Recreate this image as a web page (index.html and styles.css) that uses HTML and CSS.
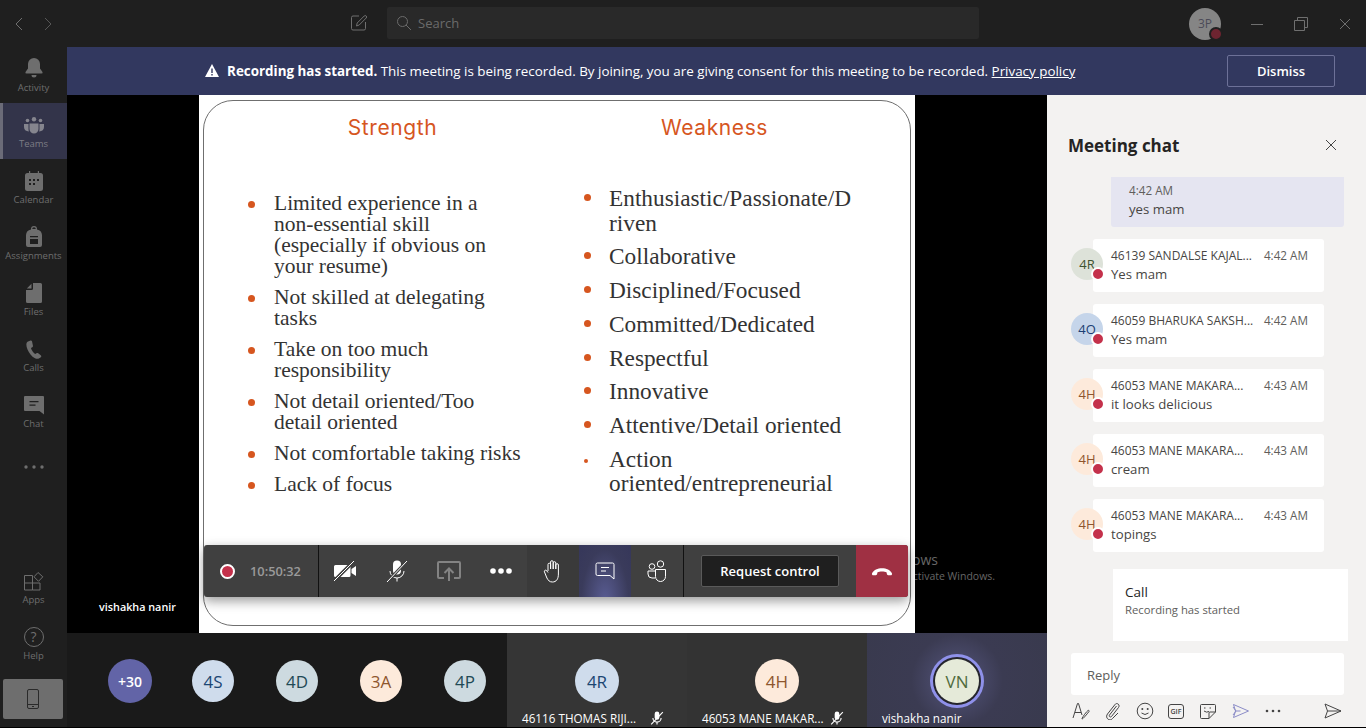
FILE: index.html
```html
<!DOCTYPE html>
<html lang="en">
<head>
    <meta charset="UTF-8">
    <meta name="viewport" content="width=device-width, initial-scale=1.0">
    <title>Meeting</title>
    <link rel="stylesheet" href="styles.css">
</head>
<body>
<div class="app">
    <header class="topbar">
        <div class="history">
            <svg width="10" height="16" viewBox="0 0 10 16"><path d="M8 2 2 8l6 6" class="line"/></svg>
            <svg width="10" height="16" viewBox="0 0 10 16"><path d="M2 2l6 6-6 6" class="line dim"/></svg>
        </div>
        <svg class="compose" width="18" height="18" viewBox="0 0 18 18"><path d="M9 2H3a1.5 1.5 0 0 0-1.500 1.500v11A1.500 1.500 0 0 0 3 16h11a1.500 1.500 0 0 0 1.500-1.500V8M6.500 12l.7-3 7-7a1.400 1.400 0 0 1 2 2l-7 7z" class="line"/></svg>
        <div class="search">
            <svg width="16" height="16" viewBox="0 0 16 16"><circle cx="6.500" cy="6.500" r="5" class="line"/><path d="M10 10l5 5" class="line"/></svg>
            <span>Search</span>
        </div>
        <div class="me">3P<i class="me-status"></i></div>
        <div class="window-btns">
            <svg width="14" height="14" viewBox="0 0 14 14"><path d="M1 7.500h12" class="line"/></svg>
            <svg width="14" height="14" viewBox="0 0 14 14"><path d="M3.500 3V.5h10v10H11M.5 3.500h10v10H.5z" class="line"/></svg>
            <svg width="14" height="14" viewBox="0 0 14 14"><path d="M2 2l10 10M12 2 2 12" class="line"/></svg>
        </div>
    </header>

    <div class="content">
        <nav class="rail">
            <a class="rail-item">
                <svg width="20" height="22" viewBox="0 0 20 22"><path d="M10 1a6 6 0 0 0-6 6v4.500L1.500 15q-.5 1.500 1 1.500h15q1.500 0 1-1.500L16 11.500V7a6 6 0 0 0-6-6zM7.500 18h5a2.500 2.500 0 0 1-5 0z"/></svg>
                Activity
            </a>
            <a class="rail-item active">
                <svg width="20" height="18" viewBox="0 0 20 18"><circle cx="10" cy="2.200" r="2.200"/><circle cx="3.500" cy="3.500" r="1.800"/><circle cx="16.500" cy="3.500" r="1.800"/><path d="M5.500 6.500h9V12a4.500 4.500 0 0 1-9 0zM0 7h4.500v5q0 1.500.5 2.500Q0 14 0 10zM20 7h-4.500v5q0 1.500-.5 2.500q5-.5 5-4.500z"/></svg>
                Teams
            </a>
            <a class="rail-item">
                <svg width="18" height="20" viewBox="0 0 18 20"><path d="M2.500 2H4V0h1.200v2h7.600V0H14v2h1.500A2.500 2.500 0 0 1 18 4.500v13a2.500 2.500 0 0 1-2.500 2.500h-13A2.500 2.500 0 0 1 0 17.500v-13A2.500 2.500 0 0 1 2.500 2z"/><path d="M4 8h2v2H4zM8 8h2v2H8zM12 8h2v2h-2zM4 12h2v2H4zM8 12h2v2H8z" fill="#1f1f1f"/></svg>
                Calendar
            </a>
            <a class="rail-item">
                <svg width="18" height="21" viewBox="0 0 18 21"><path d="M6 3.500V3a3 3 0 0 1 6 0v.5A6 6 0 0 1 17 9v10a2 2 0 0 1-2 2H3a2 2 0 0 1-2-2V9a6 6 0 0 1 5-5.500zM7.200 3h3.600a1.800 1.800 0 0 0-3.600 0z"/><path d="M5 10h8v1.300H5zM5 13h8v5H5z" fill="#1f1f1f"/></svg>
                Assignments
            </a>
            <a class="rail-item">
                <svg width="16" height="20" viewBox="0 0 16 20"><path d="M7 0h7.500A1.500 1.500 0 0 1 16 1.500v17a1.500 1.500 0 0 1-1.500 1.500h-13A1.500 1.500 0 0 1 0 18.500V7h5.500A1.500 1.500 0 0 0 7 5.500zM5.500 .8V5.500H.8z"/></svg>
                Files
            </a>
            <a class="rail-item">
                <svg width="16" height="19" viewBox="0 0 16 19"><path d="M4.500.5 1.500 1.800C0 3 0 6 1.500 9.500s4 7 7.500 8.800c2 1 4.500.5 6-1.300.5-.7.300-1.300-.3-1.800l-2.500-2c-.6-.4-1.200-.4-1.700 0l-1.300.9c-1.500-.7-3.800-4-4.200-6l1.300-.8c.6-.4.8-1 .6-1.700L6 1.300C5.700.5 5.200.2 4.500.5z"/></svg>
                Calls
            </a>
            <a class="rail-item">
                <svg width="20" height="19" viewBox="0 0 20 19"><path d="M1 0h18a1 1 0 0 1 1 1v17.500L15.500 15H1a1 1 0 0 1-1-1V1a1 1 0 0 1 1-1z"/><path d="M5.500 5h9v1.300h-9zM5.500 8.500h6v1.300h-6z" fill="#1f1f1f"/></svg>
                Chat
            </a>
            <a class="rail-item more">
                <svg width="20" height="4" viewBox="0 0 20 4"><circle cx="2" cy="2" r="1.700"/><circle cx="10" cy="2" r="1.700"/><circle cx="18" cy="2" r="1.700"/></svg>
            </a>
            <div class="rail-bottom">
                <a class="rail-item">
                    <svg width="20" height="20" viewBox="0 0 20 20"><path d="M.5 4.500h8v14.500h-8zM.5 12h15.500v7H8.500M8.500 12V19M10 5.800 14 1.500l4.800 4.300-4.300 4.500z" class="line"/></svg>
                    Apps
                </a>
                <a class="rail-item">
                    <span class="help-icon">?</span>
                    Help
                </a>
                <div class="phone-btn">
                    <svg width="12" height="20" viewBox="0 0 12 20"><rect x=".5" y=".5" width="11" height="19" rx="1.500" class="line"/><path d="M.5 15.500h11" class="line"/><path d="M5 17h2v1H5z" fill="#2a2a2a"/></svg>
                </div>
            </div>
        </nav>

        <main class="main">
            <div class="banner">
                <p class="banner-msg">
                    <svg width="14" height="13" viewBox="0 0 14 13"><path d="M7 0 14 13H0z" fill="#fff"/><path d="M6.300 4.500h1.400v4.500H6.300zM6.300 10h1.400v1.400H6.300z" fill="#32385f"/></svg>
                    <b>Recording has started.</b> This meeting is being recorded. By joining, you are giving consent for this meeting to be recorded. <u>Privacy policy</u>
                </p>
                <button class="dismiss">Dismiss</button>
            </div>

            <div class="workspace">
                <section class="call">
                    <div class="stage">
                        <div class="watermark">
                            <span class="wm-big">Activate Windows</span>
                            <span>Go to Settings to activate Windows.</span>
                        </div>
                        <div class="slide">
                            <div class="slide-frame">
                                <div class="slide-col">
                                    <h2>Strength</h2>
                                    <ul>
                                        <li><span>Limited experience in a<br>non-essential skill<br>(especially if obvious on<br>your resume)</span></li>
                                        <li><span>Not skilled at delegating<br>tasks</span></li>
                                        <li><span>Take on too much<br>responsibility</span></li>
                                        <li><span>Not detail oriented/Too<br>detail oriented</span></li>
                                        <li><span>Not comfortable taking risks</span></li>
                                        <li><span>Lack of focus</span></li>
                                    </ul>
                                </div>
                                <div class="slide-col right">
                                    <h2>Weakness</h2>
                                    <ul>
                                        <li><span>Enthusiastic/Passionate/D<br>riven</span></li>
                                        <li><span>Collaborative</span></li>
                                        <li><span>Disciplined/Focused</span></li>
                                        <li><span>Committed/Dedicated</span></li>
                                        <li><span>Respectful</span></li>
                                        <li><span>Innovative</span></li>
                                        <li><span>Attentive/Detail oriented</span></li>
                                        <li class="tiny"><span>Action<br>oriented/entrepreneurial</span></li>
                                    </ul>
                                </div>
                            </div>
                        </div>
                        <span class="presenter">vishakha nanir</span>
                        <div class="controls">
                            <div class="ctl-timer">
                                <i class="rec"></i>
                                <span>10:50:32</span>
                            </div>
                            <div class="ctl-group">
                                <button class="ctl">
                                    <svg width="24" height="24" viewBox="0 0 24 24"><path d="M1 7.500A1.500 1.500 0 0 1 2.500 6H16a1.500 1.500 0 0 1 1.500 1.500v9A1.500 1.500 0 0 1 16 18H2.500A1.500 1.500 0 0 1 1 16.500zM18.500 10l4.500-3v10l-4.500-3z" fill="#fff"/><path d="M1 22 21 2" stroke="#404040" stroke-width="3.500"/><path d="M1 22 21 2" class="line"/></svg>
                                </button>
                                <button class="ctl">
                                    <svg width="24" height="24" viewBox="0 0 24 24"><rect x="8" y="1.500" width="8" height="14" rx="4" fill="#fff"/><path d="M5 12a7 7 0 0 0 14 0M12 19v3.500" class="line"/><path d="M2 23 22 2" stroke="#404040" stroke-width="3"/><path d="M2 23 22 2" class="line"/></svg>
                                </button>
                                <button class="ctl">
                                    <svg class="faded" width="24" height="24" viewBox="0 0 24 24"><path d="M7 19H2a1 1 0 0 1-1-1V4a1 1 0 0 1 1-1h20a1 1 0 0 1 1 1v14a1 1 0 0 1-1 1h-5" class="line wide"/><path d="M12 22V10M7.500 14 12 9.500l4.500 4.500" class="line wide"/></svg>
                                </button>
                                <button class="ctl">
                                    <svg width="22" height="6" viewBox="0 0 22 6"><circle cx="3" cy="3" r="2.800" fill="#fff"/><circle cx="11" cy="3" r="2.800" fill="#fff"/><circle cx="19" cy="3" r="2.800" fill="#fff"/></svg>
                                </button>
                                <button class="ctl darker">
                                    <svg width="20" height="24" viewBox="0 0 20 24"><path d="M5 12V5.500a1.300 1.300 0 0 1 2.600 0V10 3a1.300 1.300 0 0 1 2.600 0v7-6a1.300 1.300 0 0 1 2.600 0v6-4a1.300 1.300 0 0 1 2.600 0v9c0 5-2 8-6 8-3 0-4-1.500-5.500-4L1.500 13c-.8-1.200 1-2.500 2-1.500L5 13.500" class="line"/></svg>
                                </button>
                                <button class="ctl chat-on">
                                    <svg width="20" height="20" viewBox="0 0 20 20"><path d="M2.500 2h15A1.500 1.500 0 0 1 19 3.500V18l-4-3.500H2.500A1.500 1.500 0 0 1 1 13V3.500A1.500 1.500 0 0 1 2.500 2zM6 6.500h8M6 10h5" class="line"/></svg>
                                </button>
                                <button class="ctl">
                                    <svg width="20" height="22" viewBox="0 0 20 22"><circle cx="5" cy="6.500" r="2.800" class="line"/><circle cx="13.500" cy="4" r="3.200" class="line"/><path d="M8 11H1v3a4 4 0 0 0 4 4h3M8.500 9.500h10v7a5 5 0 0 1-10 0z" class="line"/></svg>
                                </button>
                            </div>
                            <div class="ctl-request">
                                <button class="request">Request control</button>
                            </div>
                            <button class="hangup">
                                <svg width="22" height="10" viewBox="0 0 22 10"><path d="M1 7.500C4 .5 18 .5 21 7.500c.3 1-.4 1.800-1.300 1.800h-2.500c-.8 0-1.200-.5-1.300-1.200l-.4-1.800C13.500 5.300 8.500 5.300 6.500 6.300l-.4 1.800c-.1.700-.5 1.200-1.300 1.200H2.300C1.400 9.300.7 8.500 1 7.500z" fill="#fff"/></svg>
                            </button>
                        </div>
                    </div>

                    <div class="strip">
                        <div class="tile"><div class="avatar overflow">+30</div></div>
                        <div class="tile"><div class="avatar blue">4S</div></div>
                        <div class="tile"><div class="avatar slate">4D</div></div>
                        <div class="tile"><div class="avatar peach">3A</div></div>
                        <div class="tile"><div class="avatar slate">4P</div></div>
                        <div class="tile wide-tile">
                            <div class="avatar blue">4R</div>
                            <div class="tile-name">
                                <span>46116 THOMAS RIJI...</span>
                                <svg class="muted" width="14" height="14" viewBox="0 0 24 24"><rect x="8" y="1" width="8" height="14" rx="4" fill="#fff"/><path d="M5 12a7 7 0 0 0 14 0M12 19v4" class="line wide"/><path d="M2 23 22 2" class="line wide"/></svg>
                            </div>
                        </div>
                        <div class="tile wide-tile">
                            <div class="avatar peach">4H</div>
                            <div class="tile-name">
                                <span>46053 MANE MAKAR...</span>
                                <svg class="muted" width="14" height="14" viewBox="0 0 24 24"><rect x="8" y="1" width="8" height="14" rx="4" fill="#fff"/><path d="M5 12a7 7 0 0 0 14 0M12 19v4" class="line wide"/><path d="M2 23 22 2" class="line wide"/></svg>
                            </div>
                        </div>
                        <div class="tile wide-tile speaking">
                            <div class="avatar green">VN</div>
                            <div class="tile-name"><span>vishakha nanir</span></div>
                        </div>
                    </div>
                </section>

                <aside class="chat">
                    <div class="chat-head">
                        <h1>Meeting chat</h1>
                        <svg width="12" height="12" viewBox="0 0 12 12"><path d="M1 1l10 10M11 1 1 11" class="line"/></svg>
                    </div>
                    <div class="messages">
                        <div class="msg-own">
                            <time>4:42 AM</time>
                            <p>yes mam</p>
                        </div>
                        <div class="msg">
                            <div class="msg-avatar sage">4R<i></i></div>
                            <div class="msg-body">
                                <div class="msg-meta"><span class="who">46139 SANDALSE KAJAL...</span><time>4:42 AM</time></div>
                                <p>Yes mam</p>
                            </div>
                        </div>
                        <div class="msg">
                            <div class="msg-avatar blue2">4O<i></i></div>
                            <div class="msg-body">
                                <div class="msg-meta"><span class="who">46059 BHARUKA SAKSH...</span><time>4:42 AM</time></div>
                                <p>Yes mam</p>
                            </div>
                        </div>
                        <div class="msg">
                            <div class="msg-avatar peach">4H<i></i></div>
                            <div class="msg-body">
                                <div class="msg-meta"><span class="who">46053 MANE MAKARA...</span><time>4:43 AM</time></div>
                                <p>it looks delicious</p>
                            </div>
                        </div>
                        <div class="msg">
                            <div class="msg-avatar peach">4H<i></i></div>
                            <div class="msg-body">
                                <div class="msg-meta"><span class="who">46053 MANE MAKARA...</span><time>4:43 AM</time></div>
                                <p>cream</p>
                            </div>
                        </div>
                        <div class="msg">
                            <div class="msg-avatar peach">4H<i></i></div>
                            <div class="msg-body">
                                <div class="msg-meta"><span class="who">46053 MANE MAKARA...</span><time>4:43 AM</time></div>
                                <p>topings</p>
                            </div>
                        </div>
                        <div class="call-card">
                            <strong>Call</strong>
                            <span>Recording has started</span>
                        </div>
                    </div>
                    <div class="reply">Reply</div>
                    <div class="composer">
                        <svg width="18" height="18" viewBox="0 0 18 18"><path d="M1 16 5.500 1.500h1L10 13M3 10.500h6M10 16.500c1-2 4-6.500 6-8 1-.5 1.500.5 1 1-1.500 2-4 5-6 7-.5.500-1.500.5-1 0z" class="line"/></svg>
                        <svg width="18" height="18" viewBox="0 0 18 18"><path d="M12.500 4 5.500 13c-1 1.300.8 2.800 2 1.500l7-9c2-2.500-1.500-5.500-3.500-3l-7.500 9.500c-3 4 2.500 8 5 4.500L14 11" class="line"/></svg>
                        <svg width="18" height="18" viewBox="0 0 18 18"><circle cx="9" cy="9" r="7.800" class="line"/><circle cx="6.300" cy="7" r="1" fill="#444"/><circle cx="11.700" cy="7" r="1" fill="#444"/><path d="M5.500 11q3.500 3 7 0" class="line"/></svg>
                        <span class="gif">GIF</span>
                        <svg width="18" height="18" viewBox="0 0 18 18"><path d="M10 16.500H2.500a1 1 0 0 1-1-1v-12a1 1 0 0 1 1-1h13a1 1 0 0 1 1 1V10zM10 16.500V11a1 1 0 0 1 1-1h5.500" class="line"/><path d="M5 6h1.500M10.500 6H12M5 9q2.500 2 5 .5" class="line"/></svg>
                        <svg class="lilac" width="18" height="18" viewBox="0 0 18 18"><path d="M1.500 2.500 16.500 9 1.500 15.500 3.500 9zM3.500 9h5M1 5 4 9 1 13" class="line"/></svg>
                        <svg width="16" height="4" viewBox="0 0 16 4"><circle cx="2" cy="2" r="1.300" fill="#444"/><circle cx="8" cy="2" r="1.300" fill="#444"/><circle cx="14" cy="2" r="1.300" fill="#444"/></svg>
                        <svg class="send" width="18" height="16" viewBox="0 0 18 16"><path d="M1 1 17 8 1 15l2.500-7zM3.500 8H17" class="line"/></svg>
                    </div>
                </aside>
            </div>
        </main>
    </div>
</div>
</body>
</html>
```

FILE: styles.css
```css
* {
    box-sizing: border-box;
}
html, body {
    margin: 0;
    height: 100%;
    background: #000;
    overflow: hidden;
}
body {
    font-family: "Open Sans", "Noto Sans", sans-serif;
    color: #252423;
}
p, h1, h2, ul {
    margin: 0;
    padding: 0;
}
button {
    font-family: inherit;
    border: none;
    background: none;
    padding: 0;
}
.line {
    fill: none;
    stroke: currentColor;
    stroke-width: 1;
}
.line.wide {
    stroke-width: 2;
}
.app {
    height: 727px;
    display: flex;
    flex-direction: column;
}

/* top bar */
.topbar {
    height: 47px;
    flex: none;
    background: #1f1f1f;
    display: flex;
    align-items: center;
    color: #6f6f6f;
}
.history {
    width: 350px;
    padding-left: 14px;
    display: flex;
    gap: 19px;
}
.history .dim {
    opacity: .7;
}
.compose {
    margin-top: -1px;
}
.search {
    width: 592px;
    height: 32px;
    margin-left: 19px;
    margin-top: -1px;
    background: #292929;
    border-radius: 2px;
    display: flex;
    align-items: center;
    gap: 6px;
    padding-left: 9px;
    font-size: 13px;
    color: #6b6b6b;
}
.me {
    width: 32px;
    height: 32px;
    margin-left: 210px;
    border-radius: 50%;
    background: #858585;
    color: #4b4b58;
    font-size: 12px;
    display: flex;
    align-items: center;
    justify-content: center;
    position: relative;
}
.me-status {
    position: absolute;
    right: -2px;
    bottom: -1px;
    width: 14px;
    height: 14px;
    border-radius: 50%;
    background: #6d2430;
    border: 2px solid #1f1f1f;
}
.window-btns {
    margin-left: 29px;
    display: flex;
    gap: 30px;
}

.content {
    flex: 1;
    display: flex;
    min-height: 0;
}

/* left rail */
.rail {
    width: 67px;
    flex: none;
    background: #1f1f1f;
    display: flex;
    flex-direction: column;
    color: #6e6e6e;
}
.rail-item {
    height: 56px;
    flex: none;
    display: flex;
    flex-direction: column;
    align-items: center;
    justify-content: flex-end;
    gap: 3px;
    padding-bottom: 9px;
    font-size: 9.500px;
    line-height: 12px;
    fill: #6e6e6e;
}
.rail-item.active {
    background: #33344a;
    border-left: 3px solid #6b6b78;
    padding-right: 3px;
    color: #7d7d85;
    fill: #85858e;
}
.rail-item.more {
    justify-content: center;
    padding-bottom: 0;
}
.rail-bottom {
    margin-top: auto;
    padding-bottom: 8px;
    display: flex;
    flex-direction: column;
}
.help-icon {
    width: 20px;
    height: 20px;
    border: 1px solid #6e6e6e;
    border-radius: 50%;
    font-size: 14px;
    line-height: 18px;
    text-align: center;
}
.phone-btn {
    width: 60px;
    height: 40px;
    margin: 8px 0 0 3px;
    background: #6e6e6e;
    border-radius: 2px;
    color: #2a2a2a;
    display: flex;
    align-items: center;
    justify-content: center;
}

.main {
    flex: 1;
    min-width: 0;
    display: flex;
    flex-direction: column;
}

/* recording banner */
.banner {
    height: 48px;
    flex: none;
    background: #32385f;
    display: flex;
    align-items: center;
    color: #fff;
    font-size: 13.400px;
}
.banner-msg {
    flex: 1;
    text-align: center;
    padding-right: 14px;
    white-space: nowrap;
}
.banner-msg svg {
    vertical-align: -1px;
    margin-right: 5px;
}
.dismiss {
    width: 108px;
    height: 32px;
    margin-right: 31px;
    border: 1px solid #6d7198;
    border-radius: 2px;
    color: #fff;
    font-weight: 600;
    font-size: 13px;
}

.workspace {
    flex: 1;
    display: flex;
    min-height: 0;
}
.call {
    width: 980px;
    flex: none;
    display: flex;
    flex-direction: column;
}

/* shared screen */
.stage {
    height: 538px;
    flex: none;
    background: #000;
    position: relative;
    display: flex;
    justify-content: center;
}
.slide {
    width: 716px;
    height: 100%;
    background: #fff;
    padding: 5px 4px 7px;
    position: relative;
}
.slide-frame {
    height: 100%;
    border: 1px solid #6f6f6f;
    border-radius: 30px;
    display: grid;
    grid-template-columns: 377px 1fr;
}
.slide-col h2 {
    height: 92px;
    padding-top: 10px;
    font-weight: 400;
    font-size: 21px;
    line-height: 34px;
    letter-spacing: .6px;
    color: #d6561f;
    text-align: center;
    font-family: "Inter", "Noto Sans", sans-serif;
}
.slide-col ul {
    list-style: none;
    padding-left: 44px;
    display: flex;
    flex-direction: column;
    gap: 10px;
    font-family: "Liberation Serif", serif;
    font-size: 21.500px;
    line-height: 21px;
    color: #333;
}
.slide-col li {
    display: flex;
    align-items: flex-start;
}
.slide-col li::before {
    content: "";
    flex: none;
    width: 7px;
    height: 7px;
    margin: 8px 19px 0 0;
    border-radius: 50%;
    background: #d6561f;
}
.slide-col.right h2 {
    padding-right: 62px;
}
.slide-col.right ul {
    padding-left: 3px;
    margin-top: -7px;
    gap: 9.250px;
    font-size: 23.300px;
    line-height: 24.500px;
}
.slide-col.right li::before {
    margin-right: 18px;
    margin-top: 8px;
}
.slide-col.right li.tiny::before {
    width: 4px;
    height: 4px;
    margin: 12px 21px 0 0;
}

.watermark {
    position: absolute;
    left: 756px;
    top: 455px;
    display: flex;
    flex-direction: column;
    font-size: 10.500px;
    color: #666;
    white-space: nowrap;
}
.wm-big {
    font-size: 14px;
}
.presenter {
    position: absolute;
    left: 32px;
    top: 504px;
    color: #fff;
    font-size: 10.800px;
    font-weight: 600;
}

/* call controls */
.controls {
    position: absolute;
    left: 137px;
    top: 450px;
    width: 704px;
    height: 52px;
    background: #404040;
    border-radius: 3px;
    box-shadow: 0 4px 12px rgba(0, 0, 0, .4);
    display: flex;
    color: #fff;
}
.ctl-timer {
    width: 115px;
    flex: none;
    display: flex;
    align-items: center;
    padding-left: 16px;
    gap: 15px;
    border-right: 1px solid #111;
    font-size: 12.800px;
    font-weight: 600;
    color: #9a9a9a;
}
.rec {
    width: 15px;
    height: 15px;
    border-radius: 50%;
    background: #c4314b;
    border: 2px solid #fff;
}
.ctl-group {
    display: flex;
    border-right: 1px solid #111;
}
.ctl {
    width: 52px;
    display: flex;
    align-items: center;
    justify-content: center;
    color: #fff;
}
.ctl.darker {
    background: #3a3a3a;
}
.ctl.chat-on {
    background: radial-gradient(ellipse at 50% 110%, #5a5d94 0%, #3a3b5b 65%, #36375a 100%);
}
.faded {
    opacity: .35;
}
.ctl-request {
    flex: 1;
    display: flex;
    align-items: center;
    justify-content: center;
}
.request {
    width: 138px;
    height: 32px;
    background: #1f1f1f;
    border: 1px solid #5a5a5a;
    border-radius: 2px;
    color: #fff;
    font-size: 13px;
    font-weight: 600;
}
.hangup {
    width: 52px;
    flex: none;
    background: #9f3043;
    border-radius: 0 3px 3px 0;
    display: flex;
    align-items: center;
    justify-content: center;
}

/* participants */
.strip {
    flex: 1;
    background: #1a1a1a;
    display: flex;
    padding-left: 20px;
}
.tile {
    width: 84px;
    flex: none;
    display: flex;
    flex-direction: column;
    align-items: center;
    padding-top: 27px;
}
.wide-tile {
    width: 180px;
    background: #353535;
    padding-top: 26px;
}
.wide-tile + .wide-tile {
    background: #333;
}
.wide-tile.speaking {
    background: radial-gradient(circle at 50% 50%, #55567e 0%, #3b3b52 45%, #393a4e 100%);
}
.avatar {
    width: 42px;
    height: 42px;
    border-radius: 50%;
    display: flex;
    align-items: center;
    justify-content: center;
    font-size: 17px;
    flex: none;
}
.wide-tile .avatar {
    width: 44px;
    height: 44px;
}
.avatar.overflow {
    width: 44px;
    height: 44px;
    margin: -1px 0 0 2px;
    background: #6264a7;
    color: #fff;
    font-size: 14px;
    font-weight: 600;
}
.avatar.blue {
    background: #cfdcec;
    color: #1b4673;
}
.avatar.slate {
    background: #cddae0;
    color: #1f4a56;
}
.avatar.peach {
    background: #fdeadb;
    color: #8e562e;
}
.avatar.green {
    background: #e5ead9;
    color: #4f6b3c;
    box-shadow: 0 0 0 2px #25252d, 0 0 0 5px #8f91ea;
}
.tile-name {
    width: 100%;
    margin-top: 7px;
    padding: 0 23px 0 15px;
    display: flex;
    align-items: center;
    font-size: 11.700px;
    line-height: 16px;
    color: #fff;
    white-space: nowrap;
}
.muted {
    margin-left: auto;
    color: #fff;
}

/* chat panel */
.chat {
    flex: 1;
    background: #f3f2f1;
    display: flex;
    flex-direction: column;
}
.chat-head {
    height: 82px;
    flex: none;
    display: flex;
    align-items: center;
    justify-content: space-between;
    padding: 35px 29px 17px 21px;
    color: #444;
}
.chat-head h1 {
    font-size: 17px;
    font-weight: 700;
    color: #252423;
}
.messages {
    flex: 1;
    font-size: 13.200px;
    color: #484644;
}
.msg-own {
    width: 233px;
    height: 50px;
    margin-left: 64px;
    padding: 4px 18px;
    background: #e5e5f1;
    border-radius: 0 0 3px 3px;
    line-height: 19px;
}
.msg-own time {
    font-size: 11.700px;
    color: #605e5c;
}
.msg {
    display: flex;
    margin: 12px 0 0 24px;
    align-items: flex-start;
}
.msg-avatar {
    width: 32px;
    height: 32px;
    flex: none;
    margin: 9px -10px 0 0;
    border-radius: 50%;
    display: flex;
    align-items: center;
    justify-content: center;
    font-size: 13px;
    position: relative;
    z-index: 1;
}
.msg-avatar i {
    position: absolute;
    right: -2px;
    bottom: -1px;
    width: 14px;
    height: 14px;
    border-radius: 50%;
    background: #c4314b;
    border: 2px solid #fff;
}
.msg-avatar.sage {
    background: #dde2d9;
    color: #3f5330;
}
.msg-avatar.blue2 {
    background: #c5d5ea;
    color: #1b3f73;
}
.msg-avatar.peach {
    background: #fdeadb;
    color: #8e562e;
}
.msg-body {
    width: 231px;
    height: 53px;
    background: #fff;
    border-radius: 3px;
    padding: 7px 16px 0 18px;
    line-height: 19px;
}
.msg-meta {
    display: flex;
    justify-content: space-between;
    font-size: 11.700px;
}
.msg-meta .who {
    font-size: 12px;
}
.msg-meta time {
    color: #605e5c;
}
.call-card {
    width: 235px;
    height: 72px;
    margin: 17px 0 0 66px;
    padding: 14px 12px;
    background: #fff;
    display: flex;
    flex-direction: column;
    line-height: 18px;
}
.call-card strong {
    font-weight: 400;
    font-size: 13.500px;
    color: #252423;
}
.call-card span {
    font-size: 11.300px;
    color: #605e5c;
}
.reply {
    width: 273px;
    height: 42px;
    flex: none;
    margin-left: 24px;
    padding: 0 16px;
    background: #fff;
    border-radius: 3px;
    font-size: 13px;
    line-height: 44px;
    color: #605e5c;
}
.composer {
    height: 32px;
    flex: none;
    margin-left: 25px;
    padding-right: 24px;
    display: flex;
    align-items: center;
    gap: 14px;
    color: #444;
}
.gif {
    width: 16px;
    height: 15px;
    margin-right: 1px;
    border: 1px solid #444;
    border-radius: 3px;
    font-size: 7px;
    font-weight: 600;
    line-height: 13px;
    text-align: center;
}
.lilac {
    color: #8b8cc7;
    margin: 0 1px;
}
.send {
    margin-left: auto;
}
```
